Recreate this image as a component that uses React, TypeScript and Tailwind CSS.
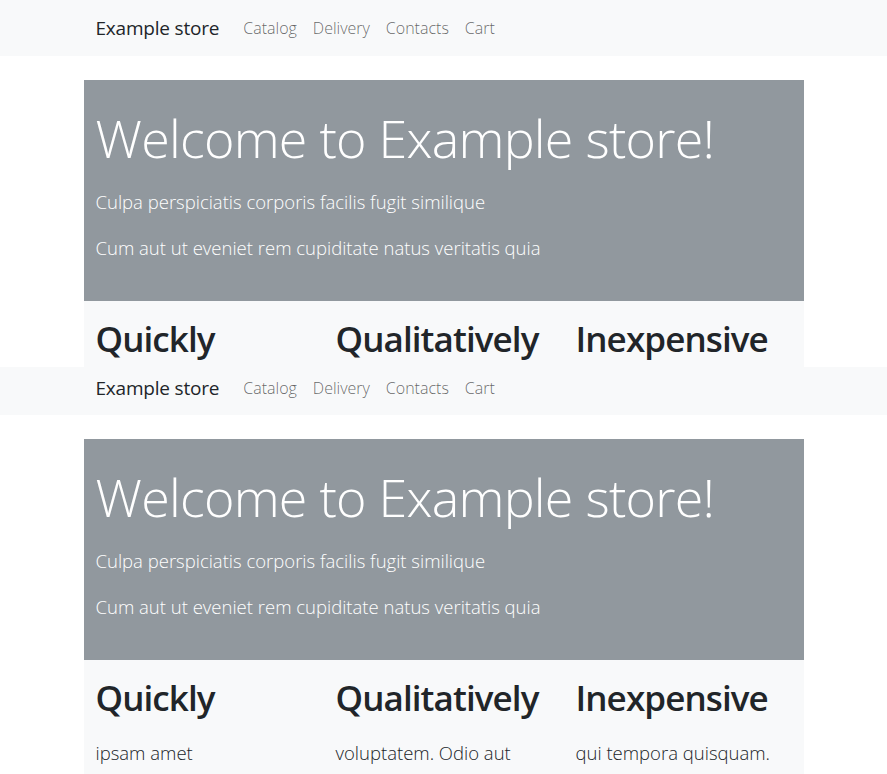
const links = ["Catalog", "Delivery", "Contacts", "Cart"];

const features = [
  { title: "Quickly", text: "ipsam amet" },
  { title: "Qualitatively", text: "voluptatem. Odio aut" },
  { title: "Inexpensive", text: "qui tempora quisquam." },
];

function Navbar({ className }: { className: string }) {
  return (
    <nav className={`bg-[#f8f9fa] flex ${className}`}>
      <div className="mx-auto w-[720px] px-3 flex items-center">
        <a className="text-[19px] leading-[30px] tracking-[-0.2px] text-[#212529] mr-4">Example store</a>
        <ul className="flex">
          {links.map((l) => (
            <li key={l} className="px-2 text-base leading-6 font-light text-black/60">
              {l}
            </li>
          ))}
        </ul>
      </div>
    </nav>
  );
}

function Page({ second }: { second?: boolean }) {
  return (
    <div className={second ? "" : "h-[367px] overflow-hidden"}>
      <Navbar className={second ? "h-12 items-start pt-[6px]" : "h-14 items-center"} />
      <main className="mx-auto w-[720px] mt-6">
        <div className="bg-[#91989e] text-white px-3 pt-6 h-[221px]">
          <h1 className="text-[52px] leading-[67px] tracking-[-0.75px] font-light mb-4">Welcome to Example store!</h1>
          <p className="text-[18.5px] leading-[30px] font-light mb-4">Culpa perspiciatis corporis facilis fugit similique</p>
          <p className="text-[18.5px] leading-[30px] font-light">Cum aut ut eveniet rem cupiditate natus veritatis quia</p>
        </div>
        <div className="bg-[#f8f9fa] grid grid-cols-3 pt-[14px] h-[114px]">
          {features.map((f) => (
            <div key={f.title} className="px-3">
              <h2 className="text-[35px] leading-[48px] tracking-[-0.9px] font-semibold text-[#212529]">{f.title}</h2>
              <p className="mt-4 text-[18.5px] leading-[30px] font-light text-[#212529]">{f.text}</p>
            </div>
          ))}
        </div>
      </main>
    </div>
  );
}

export default function App() {
  return (
    <div className="h-[774px] overflow-hidden bg-white font-['Open_Sans',sans-serif]">
      <Page />
      <Page second />
    </div>
  );
}
